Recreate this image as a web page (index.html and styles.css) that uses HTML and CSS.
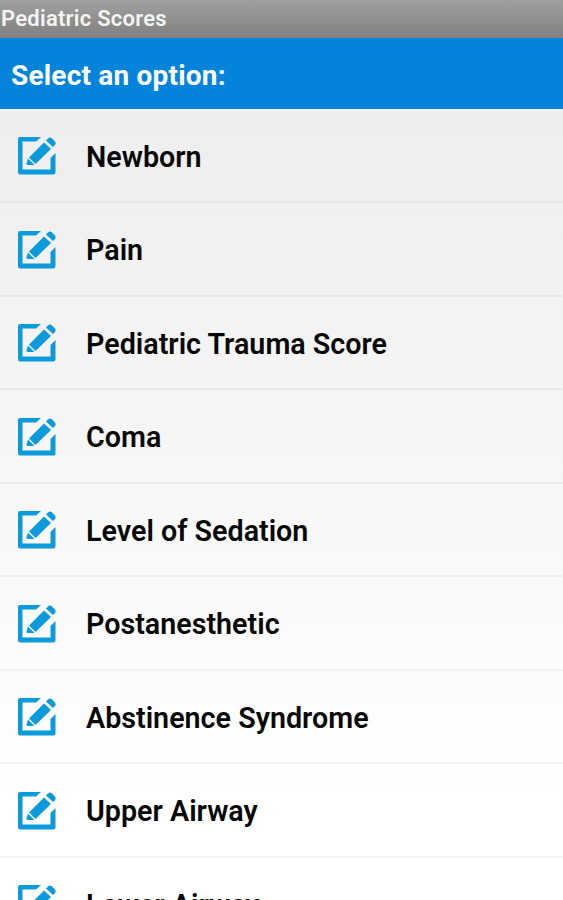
FILE: index.html
```html
<!DOCTYPE html>
<html lang="en">
<head>
    <meta charset="UTF-8">
    <title>Pediatric Scores</title>
    <link rel="stylesheet" href="styles.css">
</head>
<body>
<svg class="defs">
    <symbol id="edit" viewBox="0 0 40 40">
        <path d="M3 1H24L19 5.500H5.500V33.500H33.500V22L38.500 17V36Q38.500 38.500 36 38.500H3Q1 38.500 1 36V3Q1 1 3 1Z" fill="currentColor"/>
        <path d="M12 21.500L27 6.500L34 13L18.500 28Z" fill="currentColor"/>
        <path d="M11 22.500L17.500 29H11Q9.500 29 9.500 27.500Z" fill="currentColor"/>
        <path d="M29 4.500L31 2.500Q33 .5 35 2.500L38 5.500Q39.500 7.500 38 9L36 11Z" fill="currentColor"/>
    </symbol>
</svg>
<div class="title">Pediatric Scores</div>
<div class="header">Select an option:</div>
<ul class="list">
    <li><svg class="icon"><use href="#edit"/></svg><span>Newborn</span></li>
    <li><svg class="icon"><use href="#edit"/></svg><span>Pain</span></li>
    <li><svg class="icon"><use href="#edit"/></svg><span>Pediatric Trauma Score</span></li>
    <li><svg class="icon"><use href="#edit"/></svg><span>Coma</span></li>
    <li><svg class="icon"><use href="#edit"/></svg><span>Level of Sedation</span></li>
    <li><svg class="icon"><use href="#edit"/></svg><span>Postanesthetic</span></li>
    <li><svg class="icon"><use href="#edit"/></svg><span>Abstinence Syndrome</span></li>
    <li><svg class="icon"><use href="#edit"/></svg><span>Upper Airway</span></li>
    <li><svg class="icon"><use href="#edit"/></svg><span>Lower Airway</span></li>
</ul>
</body>
</html>
```
FILE: styles.css
```css
*{
    box-sizing: border-box;
}
body{
    height: 900px;
    margin: 0;
    overflow: hidden;
    display: flex;
    flex-direction: column;
    font-family: Roboto, sans-serif;
    font-weight: 600;
    background: linear-gradient(#ebebeb, #ffffff 90%);
}
.defs{
    display: none;
}
.title{
    flex: none;
    height: 38px;
    padding-left: 1px;
    font-size: 22px;
    line-height: 37px;
    letter-spacing: 0.25px;
    color: #f4f4f4;
    background: linear-gradient(#a0a0a0, #808080);
}
.header{
    flex: none;
    height: 71px;
    padding-left: 11px;
    font-size: 28px;
    font-weight: 700;
    line-height: 75px;
    letter-spacing: 0.2px;
    color: #ffffff;
    background: #0384da;
}
.list{
    margin: 0;
    padding: 0.5px 0 0;
    list-style: none;
}
.list li{
    display: flex;
    align-items: center;
    gap: 29px;
    height: 93.5px;
    padding: 2px 0 0 17px;
    font-size: 28.7px;
    color: #080808;
    border-bottom: 2px solid rgba(0, 0, 0, 0.04);
}
.list span{
    padding-top: 1px;
}
.icon{
    width: 40px;
    height: 40px;
    color: #0b9adb;
}
```
